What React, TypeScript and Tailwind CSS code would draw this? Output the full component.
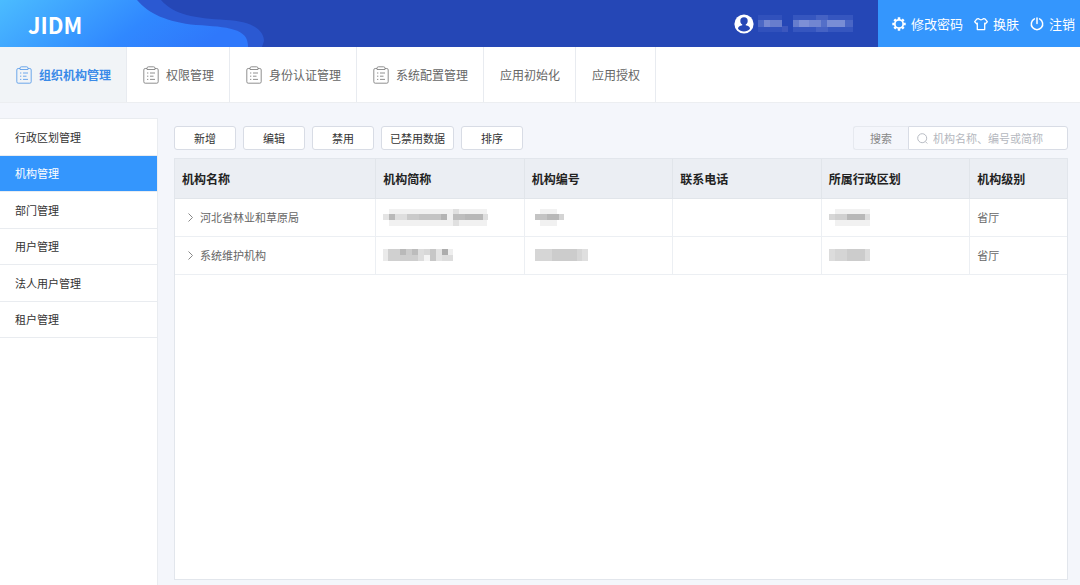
import React from "react";

type Cell = [number, number, number, number, string];

function Mosaic({ w, h, cells, label }: { w: number; h: number; cells: Cell[]; label: string }) {
  return (
    <svg width={w} height={h} viewBox={`0 0 ${w} ${h}`} className="block shrink-0" role="img" aria-label={label}>
      {cells.map(([x, y, cw, ch, fill], i) => (
        <rect key={i} x={x} y={y} width={cw} height={ch} fill={fill} />
      ))}
    </svg>
  );
}

const userCells: Cell[] = [
  [0, 0, 24, 17, "#3151bc"], [24, 11, 6, 6, "#3c57be"], [0, 5, 6, 7, "#4c68c5"], [6, 5, 6, 7, "#7588d2"],
  [12, 5, 12, 7, "#677dcd"], [35, 0, 60, 17, "#3656bf"], [58, 0, 12, 17, "#4562c4"], [35, 5, 6, 7, "#667dcd"], [41, 5, 10, 7, "#7d90d6"],
  [51, 5, 12, 7, "#7186d1"], [63, 5, 6, 7, "#546fc8"], [69, 5, 18, 7, "#798dd5"], [87, 5, 8, 7, "#4a66c5"],
];
const shortA: Cell[] = [
  [6, 0, 98, 17, "#f1f1f1"], [0, 5, 6, 6, "#e4e4e4"], [6, 5, 6, 6, "#b9b9b9"], [12, 5, 12, 6, "#dedede"],
  [24, 5, 12, 6, "#cacaca"], [36, 5, 22, 6, "#c4c4c4"], [58, 5, 6, 6, "#b4b4b4"],
  [70, 0, 6, 17, "#e0e0e0"], [70, 5, 12, 6, "#bebebe"], [82, 5, 18, 6, "#b8b8b8"], [100, 5, 5, 6, "#dedede"],
];
const shortB: Cell[] = [
  [0, 0, 70, 12, "#dddddd"], [0, 0, 5, 12, "#eaeaea"], [5, 0, 12, 12, "#d0d0d0"], [17, 0, 6, 6, "#b9b9b9"], [23, 0, 6, 6, "#cccccc"],
  [29, 0, 6, 6, "#bcbcbc"], [17, 6, 18, 6, "#cecece"], [41, 0, 6, 6, "#d8d8d8"], [41, 6, 6, 6, "#f4f4f4"], [47, 0, 6, 12, "#c7c7c7"],
  [53, 0, 6, 12, "#e4e4e4"], [59, 0, 6, 6, "#adadad"], [65, 0, 5, 6, "#eeeeee"],
];
const codeA: Cell[] = [[8, 0, 17, 17, "#f1f1f1"], [3, 5, 12, 6, "#c4c4c4"], [15, 5, 12, 6, "#b8b8b8"], [27, 5, 5, 6, "#d4d4d4"]];
const codeB: Cell[] = [[3, 0, 53, 12, "#d6d6d6"], [20, 0, 25, 12, "#cccccc"], [50, 0, 6, 12, "#dfdfdf"]];
const areaA: Cell[] = [[6, 0, 35, 17, "#f1f1f1"], [0, 5, 6, 6, "#d7d7d7"], [6, 5, 12, 6, "#d0d0d0"], [18, 5, 18, 6, "#b8b8b8"], [36, 5, 5, 6, "#dcdcdc"]];
const areaB: Cell[] = [[0, 0, 41, 12, "#dcdcdc"], [6, 0, 12, 12, "#d5d5d5"], [18, 0, 18, 12, "#cccccc"]];

function ClipboardIcon() {
  return (
    <svg width="16" height="18" viewBox="0 0 16 18" fill="none" stroke="currentColor" strokeWidth=".9" className="shrink-0 opacity-80" aria-hidden="true">
      <path d="M4 2.5H2.2Q.8 2.500.8 3.900V15.800Q.8 17.200 2.200 17.200H13.800Q15.200 17.200 15.200 15.800V3.900Q15.200 2.500 13.800 2.500H12" />
      <path d="M4 3.500V2.200Q4 .8 5.400 .8H10.600Q12 .8 12 2.200V3.500Z" />
      <path d="M4 7H5.300M7 7H12M4 10.200H5.300M7 10.200H10.500M4 13.400H5.300M7 13.400H12" />
    </svg>
  );
}

function GearIcon() {
  return (
    <svg width="14" height="14" viewBox="0 0 14 14" fill="none" stroke="currentColor" aria-hidden="true">
      <circle cx="7" cy="7" r="4.2" strokeWidth="1.8" />
      <path d="M7 .3V2.400M7 11.600V13.700M.3 7H2.400M11.600 7H13.700M2.300 2.300L3.800 3.800M10.200 10.200L11.700 11.700M11.700 2.300L10.200 3.800M3.800 10.200L2.300 11.700" strokeWidth="2.5" />
    </svg>
  );
}

function ShirtIcon() {
  return (
    <svg width="14" height="14" viewBox="0 0 14 14" fill="none" stroke="currentColor" strokeWidth="1.3" strokeLinejoin="round" aria-hidden="true">
      <path d="M4.600 1.600Q7 4 9.400 1.600L11 1.900L13.300 4.700L11.400 6.700L10.700 6.200V12.600H3.300V6.200L2.600 6.700L.7 4.700L3 1.900Z" />
    </svg>
  );
}

function PowerIcon() {
  return (
    <svg width="14" height="14" viewBox="0 0 14 14" fill="none" stroke="currentColor" strokeWidth="1.5" strokeLinecap="round" aria-hidden="true">
      <path d="M4.400 1.900A5.700 5.700 0 1 0 9.600 1.900M7 .9V6.600" />
    </svg>
  );
}

function UserIcon() {
  return (
    <svg width="20" height="20" viewBox="0 0 20 20" aria-hidden="true">
      <circle cx="10" cy="10" r="9.6" fill="#fff" />
      <circle cx="10" cy="7" r="3.7" fill="#2547b6" />
      <path d="M8.300 9.500H11.700V11.300C14.500 11.800 16 13 16 14.800C14.500 16.500 12.400 17.400 10 17.400S5.500 16.500 4 14.800C4 13 5.500 11.800 8.300 11.300Z" fill="#2547b6" />
    </svg>
  );
}

const tabs = [
  { name: "组织机构管理", icon: true },
  { name: "权限管理", icon: true },
  { name: "身份认证管理", icon: true },
  { name: "系统配置管理", icon: true },
  { name: "应用初始化", icon: false },
  { name: "应用授权", icon: false },
];
const menu = ["行政区划管理", "机构管理", "部门管理", "用户管理", "法人用户管理", "租户管理"];
const actions = ["新增", "编辑", "禁用", "已禁用数据", "排序"];
const columns = ["机构名称", "机构简称", "机构编号", "联系电话", "所属行政区划", "机构级别"];
const rows = [
  { name: "河北省林业和草原局", short: { w: 105, h: 17, cells: shortA }, code: { w: 32, h: 17, cells: codeA }, area: { w: 41, h: 17, cells: areaA }, level: "省厅" },
  { name: "系统维护机构", short: { w: 70, h: 12, cells: shortB }, code: { w: 56, h: 12, cells: codeB }, area: { w: 41, h: 12, cells: areaB }, level: "省厅" },
];

function Header() {
  return (
    <header className="relative flex h-[47px] bg-[#2547b6] text-white">
      <svg className="absolute left-0 top-0" width="270" height="47" viewBox="0 0 270 47" aria-hidden="true">
        <defs>
          <linearGradient id="wave" x1="0" y1="0" x2="1" y2="0.25">
            <stop offset="0" stopColor="#4bbcff" />
            <stop offset="0.65" stopColor="#3088ff" />
            <stop offset="1" stopColor="#2f78fb" />
          </linearGradient>
        </defs>
        <path d="M0 0H161C174 15 195 18 226 20C248 21 264 28 264 41L262 47H0Z" fill="#2b59d2" />
        <path d="M0 0H137C149 14 167 22 196 25C227 27 249 28 248 47H0Z" fill="url(#wave)" />
      </svg>
      <div className="relative flex flex-1 items-center justify-between pl-7 pr-[25px]">
        <h1 className="text-[22px] leading-6 font-bold">JIDM</h1>
        <div className="flex items-center gap-1">
          <UserIcon />
          <Mosaic w={95} h={17} cells={userCells} label="用户" />
        </div>
      </div>
      <div className="flex items-center gap-[11px] bg-[#3496fd] pl-3.5 pr-[5px] text-[13px] leading-5">
        <button className="flex items-center gap-[5px]"><GearIcon />修改密码</button>
        <button className="flex items-center gap-[5px]"><ShirtIcon />换肤</button>
        <button className="flex items-center gap-[5px]"><PowerIcon />注销</button>
      </div>
    </header>
  );
}

export default function App() {
  return (
    <div className="flex min-h-screen flex-col bg-[#f4f6fb] font-['Noto_Sans_CJK_SC',sans-serif] text-[11px] font-normal text-[#333]">
      <Header />
      <nav className="flex h-14 border-b border-[#eceef1] bg-white text-xs text-[#666]">
        {tabs.map((t, i) => (
          <a
            key={t.name}
            href="#"
            className={`flex items-center gap-[7px] border-r border-[#e8ebf0] pl-4 pr-[15px] ${i === 0 ? "bg-[#f1f4f7] font-bold text-[#3a8ae8]" : ""}`}
          >
            {t.icon && <ClipboardIcon />}
            {t.name}
          </a>
        ))}
      </nav>
      <div className="flex flex-1 gap-4 pr-3 pt-[15px]">
        <aside className="w-[158px] shrink-0 border-r border-t border-[#e9ecf0] bg-white">
          <ul className="grid h-[219px] auto-rows-fr">
            {menu.map((m, i) => (
              <li key={m} className="border-b border-[#e9ecf0]">
                <a href="#" className={`flex h-full items-center pl-[15px] ${i === 1 ? "bg-[#3496fd] text-white" : ""}`}>{m}</a>
              </li>
            ))}
          </ul>
        </aside>
        <main className="flex min-w-0 flex-1 flex-col pb-[5px] pt-2">
          <div className="mb-2 flex items-center justify-between">
            <div className="flex gap-[7px]">
              {actions.map((a) => (
                <button key={a} className="h-6 min-w-[62px] rounded-[3px] border border-[#d8dce5] bg-white px-2">{a}</button>
              ))}
            </div>
            <div className="flex h-6">
              <button className="w-[55px] rounded-l-[3px] border border-r-0 border-[#e6e9ef] text-[#888]">搜索</button>
              <label className="flex w-40 items-center gap-[5px] rounded-r-[3px] border border-[#d8dce5] bg-white pl-2">
                <svg width="11" height="11" viewBox="0 0 11 11" fill="none" stroke="#b8bcc4" className="shrink-0" aria-hidden="true">
                  <circle cx="5.2" cy="5.2" r="4.5" />
                  <path d="M8.300 8.500L10.300 10.500" />
                </svg>
                <input aria-label="搜索机构" placeholder="机构名称、编号或简称" className="min-w-0 flex-1 bg-transparent outline-none placeholder:text-[#b4b7be]" />
              </label>
            </div>
          </div>
          <section className="flex-1 border border-[#e2e6ec] bg-white">
            <table className="w-full table-fixed border-collapse text-left">
              <colgroup>
                <col className="w-[22.5%]" />
                <col className="w-[16.65%]" />
                <col className="w-[16.65%]" />
                <col className="w-[16.65%]" />
                <col className="w-[16.65%]" />
                <col />
              </colgroup>
              <thead>
                <tr className="h-[39px] bg-[#ebeef3] text-xs text-[#222]">
                  {columns.map((c) => (
                    <th key={c} className="border-b border-r border-[#e1e5ea] px-[7px] pt-0.5 font-bold last:border-r-0">{c}</th>
                  ))}
                </tr>
              </thead>
              <tbody className="text-[#666]">
                {rows.map((r) => (
                  <tr key={r.name} className="h-[38px] *:border-b *:border-r *:border-[#eceff3] *:px-[7px] *:last:border-r-0">
                    <td>
                      <div className="flex items-center gap-[7px] pl-1.5">
                        <svg width="5" height="9" viewBox="0 0 5 9" fill="none" stroke="#888" aria-hidden="true"><path d="M.5 .5L4.500 4.500L.5 8.500" /></svg>
                        {r.name}
                      </div>
                    </td>
                    <td><Mosaic {...r.short} label="已隐藏" /></td>
                    <td><Mosaic {...r.code} label="已隐藏" /></td>
                    <td></td>
                    <td><Mosaic {...r.area} label="已隐藏" /></td>
                    <td>{r.level}</td>
                  </tr>
                ))}
              </tbody>
            </table>
          </section>
        </main>
      </div>
    </div>
  );
}
